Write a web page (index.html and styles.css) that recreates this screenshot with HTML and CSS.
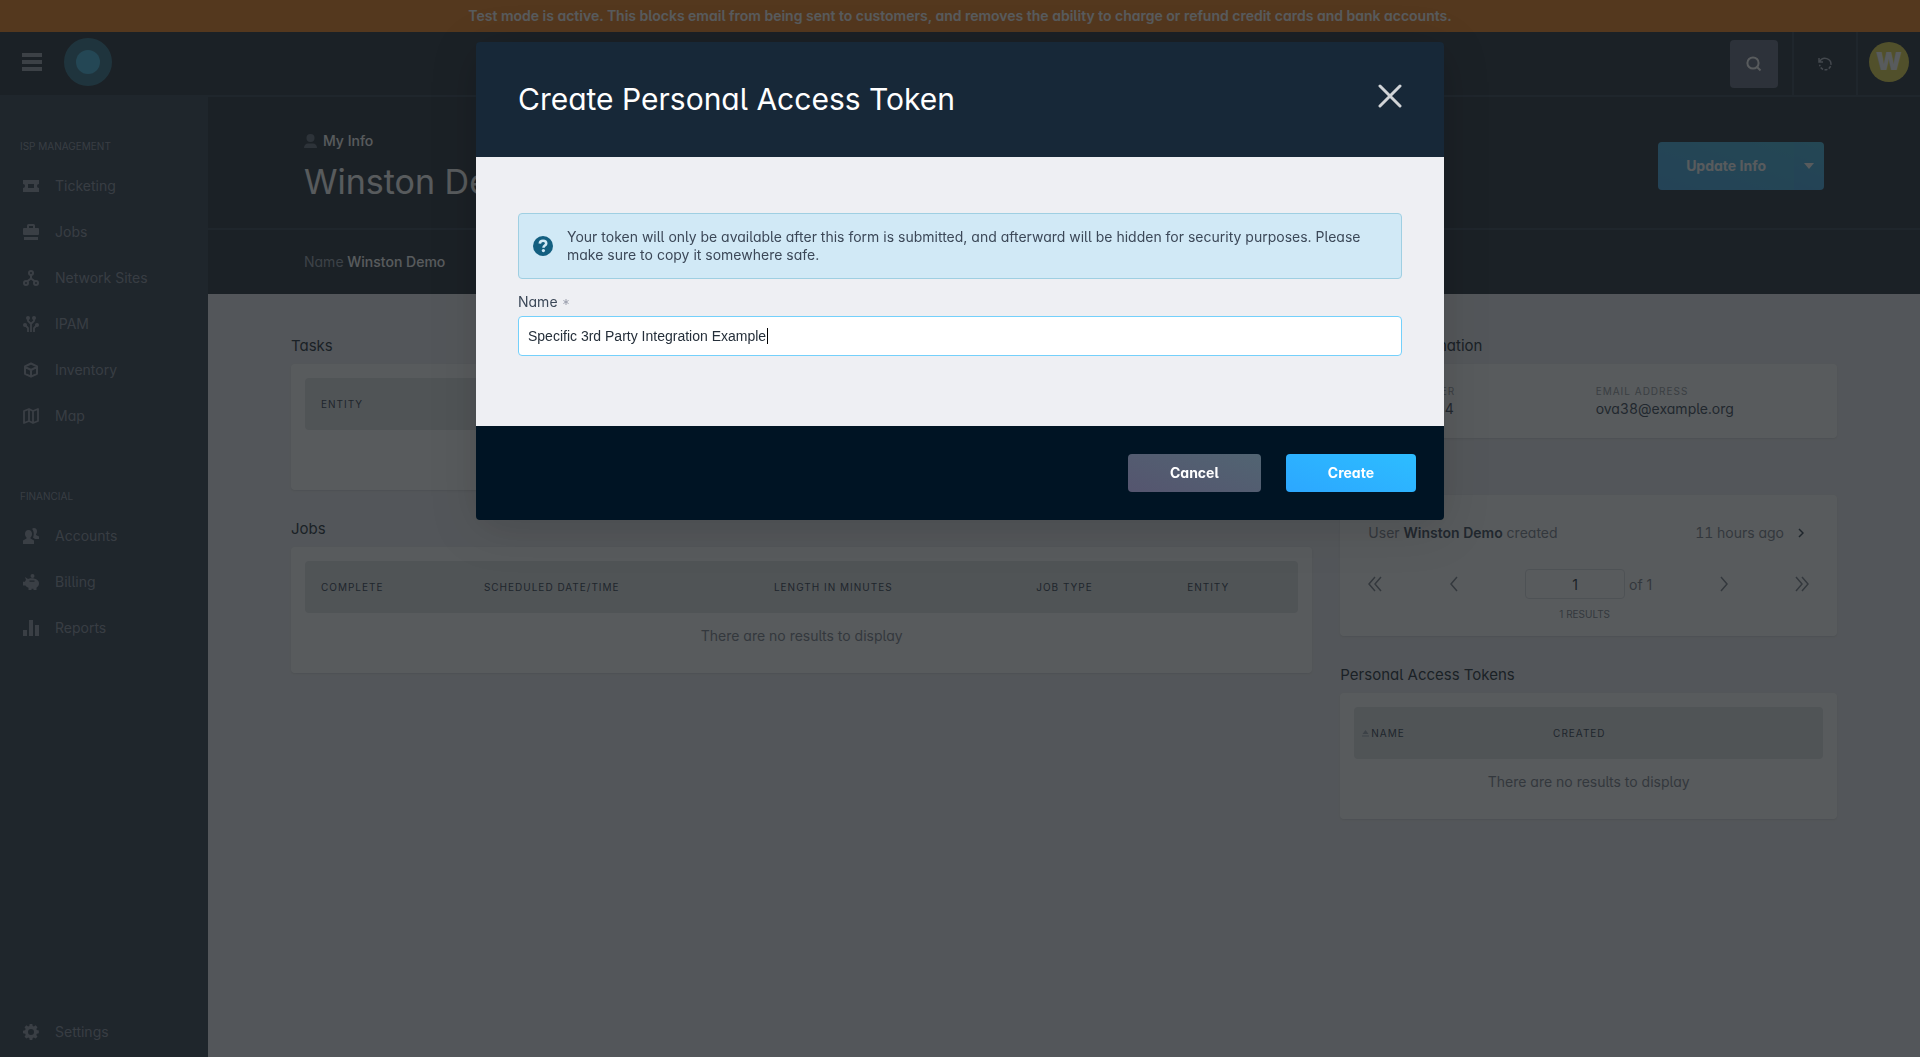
FILE: index.html
```html
<!DOCTYPE html>
<html lang="en">
<head>

<meta charset="utf-8">
<title>My Info</title>
<meta name="viewport" content="width=device-width, initial-scale=1.0">

<link rel="stylesheet" href="styles.css">

</head>
<body>

<div class="banner">Test mode is active. This blocks email from being sent to customers, and removes the ability to charge or refund credit cards and bank accounts.</div>

<header class="topbar">
    <button class="icon-button menu-button" type="button" aria-label="Menu">
        <svg width="20" height="18" viewBox="0 0 20 18"><path d="M0 0h20v4H0zM0 7h20v4H0zM0 14h20v4H0z"/></svg>
    </button>
    <a class="logo" href="#" aria-label="Home">
        <svg width="48" height="48" viewBox="0 0 48 48"><circle class="logo-ring" cx="24" cy="24" r="24"/><circle class="logo-dot" cx="24" cy="24" r="12"/></svg>
    </a>
    <button class="icon-button search-button" type="button" aria-label="Search">
        <svg width="16" height="16" viewBox="0 0 16 16" fill="none" stroke="currentColor" stroke-width="2"><circle cx="7" cy="7" r="5.6"/><path d="M10.5 10.5L14.5 14.5"/></svg>
    </button>
    <button class="icon-button topbar-cell" type="button" aria-label="History">
        <svg width="14" height="14" viewBox="0 0 14 14" fill="none" stroke="currentColor" stroke-width="1.5"><path d="M1 1v4h4M1.5 4.8C3 2 6 .8 8.800 1.600 11.500 2.400 13.200 5 12.900 7.800"/><path d="M12.600 9.200C11 12.500 7.500 13.600 4.800 12.300 3 11.400 1.900 9.800 1.700 7.800" stroke-dasharray="3 1.500"/></svg>
    </button>
    <a class="topbar-cell" href="#" aria-label="Winston Demo"><span class="avatar">W</span></a>
</header>

<div class="page">

    <nav class="sidebar">
        <h2 class="nav-title">ISP Management</h2>
        <ul class="nav-list">
            <li><a href="#"><svg class="nav-icon" viewBox="0 0 16 16"><path fill-rule="evenodd" d="M0 2h16v4a2 2 0 0 0 0 4v4H0v-4a2 2 0 0 0 0-4zM5 6v4h6V6z"/></svg>Ticketing</a></li>
            <li><a href="#"><svg class="nav-icon" viewBox="0 0 16 16"><path fill-rule="evenodd" d="M4 4V1.500Q4 0 5.500 0h5Q12 0 12 1.500V4h3q1 0 1 1v5q0 1-1 1H1q-1 0-1-1V5q0-1 1-1zM6 4h4V2H6zM1 13h14v3H1z"/></svg>Jobs</a></li>
            <li><a href="#"><svg class="nav-icon" viewBox="0 0 16 16" fill="none" stroke="currentColor" stroke-width="2"><circle cx="8" cy="3" r="2"/><circle cx="3" cy="13" r="2"/><circle cx="13" cy="13" r="2"/><path d="M8 5v4M4 11.500L8 8.500l4 3"/></svg>Network Sites</a></li>
            <li><a href="#"><svg class="nav-icon" viewBox="0 0 16 16"><circle cx="5" cy="2" r="2"/><circle cx="11" cy="2" r="2"/><circle cx="2" cy="9" r="2"/><circle cx="14" cy="9" r="2"/><path d="M5 2v3l3 3 3-3V2M8 7v9M2 9l3 3v4M14 9l-3 3v4" fill="none" stroke="currentColor" stroke-width="1.800"/></svg>IPAM</a></li>
            <li><a href="#"><svg class="nav-icon" viewBox="0 0 16 16" fill="none" stroke="currentColor" stroke-width="2" stroke-linejoin="round"><path d="M8 1.500l6 2.800v7.500l-6 2.900-6-2.900V4.300zM2 4.800L8 8l6-3.200M8 8v6.500"/></svg>Inventory</a></li>
            <li><a href="#"><svg class="nav-icon" viewBox="0 0 16 16" fill="none" stroke="currentColor" stroke-width="1.800" stroke-linejoin="round"><path d="M1 3l5-2 4 2 5-2v12l-5 2-4-2-5 2zM6 1v12M10 3v12"/></svg>Map</a></li>
        </ul>
        <h2 class="nav-title">Financial</h2>
        <ul class="nav-list">
            <li><a href="#"><svg class="nav-icon" viewBox="0 0 16 16"><path d="M5.500 2C8 2 9 4 9 6c0 1.500-.6 2.700-1.500 3.500v1L11 12.500V16H0v-3.500l3.500-2v-1C2.600 8.700 2 7.500 2 6c0-2 1-4 3.500-4zM9 1c.5-.7 1.300-1 2-1 2 0 3 1.500 3 3.500 0 1-.4 2-1 2.700V7l3 1.500V11h-4L10 9.500C11 7.500 11.300 3 9 1z"/></svg>Accounts</a></li>
            <li><a href="#"><svg class="nav-icon" viewBox="0 0 16 16"><circle cx="9.500" cy="2" r="2"/><path fill-rule="evenodd" d="M2 3l3 2c1-.5 2-.7 3.500-.7C13 4.300 16 6.500 16 9.500c0 1.800-1 3.200-2.500 4.200V16h-3v-1.200h-2V16h-3v-2.300C4 13.200 3 12.500 2.500 11.500H0V7.800h2C2.200 7 2.500 6.500 3 6zM6.500 6.500v1.200h5V6.500z"/></svg>Billing</a></li>
            <li><a href="#"><svg class="nav-icon" viewBox="0 0 16 16"><path d="M0 10h4v6H0zM6 0h4v16H6zM12 5h4v11h-4z"/></svg>Reports</a></li>
        </ul>
        <ul class="nav-list nav-bottom">
            <li><a href="#"><svg class="nav-icon" viewBox="0 0 16 16"><path fill-rule="evenodd" d="M6.700 0h2.600l.4 2 1.200.5 1.700-1.200 1.900 1.900-1.200 1.700.5 1.200 2 .5v2.700l-2 .5-.5 1.200 1.200 1.700-1.900 1.900-1.700-1.200-1.200.5-.4 2H6.700l-.4-2-1.200-.5-1.700 1.200-1.900-1.900L2.700 11l-.5-1.200-2.200-.5V6.700l2-.5.7-1.300-1.200-1.700 1.900-1.900 1.700 1.200 1.200-.5zM8 5a3 3 0 1 0 0 6 3 3 0 0 0 0-6z"/></svg>Settings</a></li>
        </ul>
    </nav>

    <main class="main">
        <div class="hero">
            <div class="hero-text">
                <p class="crumb"><svg width="13" height="14" viewBox="0 0 13 14"><circle cx="6.500" cy="4" r="4"/><path d="M0 14c0-3 2-4.500 4-4.500h5c2 0 4 1.500 4 4.500z"/></svg>My Info</p>
                <h1 class="hero-title">Winston Demo</h1>
            </div>
            <div class="split-button">
                <button type="button" class="split-main">Update Info</button>
                <button type="button" class="split-more" aria-label="More actions"><svg width="10" height="6" viewBox="0 0 10 6"><path d="M0 0h10L5 6z"/></svg></button>
            </div>
        </div>
        <div class="hero-meta"><span>Name</span> Winston Demo</div>

        <div class="content">
            <div class="col-wide">
                <section>
                    <h2 class="card-title">Tasks</h2>
                    <div class="card">
                        <table class="data-table">
                            <thead><tr><th>Entity</th></tr></thead>
                            <tbody><tr><td>There are no results to display</td></tr></tbody>
                        </table>
                    </div>
                </section>
                <section>
                    <h2 class="card-title">Jobs</h2>
                    <div class="card">
                        <table class="data-table jobs-table">
                            <thead><tr><th>Complete</th><th>Scheduled Date/Time</th><th>Length in Minutes</th><th>Job Type</th><th>Entity</th></tr></thead>
                            <tbody><tr><td colspan="5">There are no results to display</td></tr></tbody>
                        </table>
                    </div>
                </section>
            </div>

            <div class="col-narrow">
                <section>
                    <h2 class="card-title">Contact Information</h2>
                    <div class="card">
                        <dl class="contact">
                            <div><dt>Home Number</dt><dd>1 555-0134</dd></div>
                            <div><dt>Email Address</dt><dd>ova38@example.org</dd></div>
                        </dl>
                    </div>
                </section>
                <section>
                    <h2 class="card-title">Activity</h2>
                    <div class="card">
                        <div class="log-row">
                            <span>User <b>Winston Demo</b> created</span>
                            <span class="log-time">11 hours ago</span>
                            <svg width="6" height="10" viewBox="0 0 6 10" fill="none" stroke="currentColor" stroke-width="1.500"><path d="M1 1l4 4-4 4"/></svg>
                        </div>
                        <div class="pager">
                            <button class="icon-button" type="button" aria-label="First page"><svg width="14" height="16" viewBox="0 0 14 16"><path d="M7 1L1 8l6 7M13 1L7 8l6 7"/></svg></button>
                            <button class="icon-button" type="button" aria-label="Previous page"><svg width="8" height="16" viewBox="0 0 8 16"><path d="M7 1L1 8l6 7"/></svg></button>
                            <label class="pager-page"><input type="text" value="1" aria-label="Page"> of 1</label>
                            <button class="icon-button" type="button" aria-label="Next page"><svg width="8" height="16" viewBox="0 0 8 16"><path d="M1 1l6 7-6 7"/></svg></button>
                            <button class="icon-button" type="button" aria-label="Last page"><svg width="14" height="16" viewBox="0 0 14 16"><path d="M1 1l6 7-6 7M7 1l6 7-6 7"/></svg></button>
                        </div>
                        <p class="pager-total">1 results</p>
                    </div>
                </section>
                <section>
                    <h2 class="card-title">Personal Access Tokens</h2>
                    <div class="card">
                        <table class="data-table tokens-table">
                            <thead><tr><th><svg width="7" height="7" viewBox="0 0 7 7"><path d="M3.500 0L6.500 4h-6zM0 5.500h7v1H0z"/></svg>Name</th><th>Created</th></tr></thead>
                            <tbody><tr><td colspan="2">There are no results to display</td></tr></tbody>
                        </table>
                    </div>
                </section>
            </div>
        </div>
    </main>

</div>

<div class="overlay">
    <form class="modal" role="dialog" aria-labelledby="modal-title">
        <div class="modal-header">
            <h2 id="modal-title">Create Personal Access Token</h2>
            <button class="icon-button modal-close" type="button" aria-label="Close"><svg width="24" height="24" viewBox="0 0 24 24"><path d="M2 2l20 20M22 2L2 22"/></svg></button>
        </div>
        <div class="modal-body">
            <div class="notice">
                <svg width="20" height="20" viewBox="0 0 20 20"><circle cx="10" cy="10" r="10" fill="#135f80"/><path d="M6.800 7.600C6.900 5.700 8.200 4.800 10 4.800c1.900 0 3.200 1 3.200 2.600 0 2.200-2.700 2.200-2.700 4.300" fill="none" stroke="#d1e9f6" stroke-width="2.600"/><circle cx="10.400" cy="14.600" r="1.600" fill="#d1e9f6"/></svg>
                <p>Your token will only be available after this form is submitted, and afterward will be hidden for security purposes. Please make sure to copy it somewhere safe.</p>
            </div>
            <label class="field-label" for="token-name">Name <svg width="6" height="6" viewBox="0 0 6 6"><path d="M3 0v6M.4 1.500l5.200 3M5.600 1.500l-5.200 3"/></svg></label>
            <div class="field">
                <input id="token-name" type="text" value="Specific 3rd Party Integration Example">
                <span class="caret"></span>
            </div>
        </div>
        <div class="modal-footer">
            <button type="button" class="button button-cancel">Cancel</button>
            <button type="submit" class="button button-create">Create</button>
        </div>
    </form>
</div>

</body>
</html>
```
FILE: styles.css
```css
* {
    box-sizing: border-box;
}

body {
    margin: 0;
    min-height: 100vh;
    display: flex;
    flex-direction: column;
    background-color: #eeeef2;
    color: #3c4858;
    font-family: Inter, "Liberation Sans", sans-serif;
    font-feature-settings: "cv05", "cv11";
    font-size: 14px;
    line-height: 18px;
}

h1, h2, p, ul, dl, dd {
    margin: 0;
    padding: 0;
    font-weight: 400;
}

ul {
    list-style: none;
}

a {
    color: inherit;
    text-decoration: none;
}

button, input {
    font: inherit;
    font-feature-settings: inherit;
    color: inherit;
}

svg {
    display: block;
    flex: none;
    fill: currentColor;
}

svg[fill="none"] {
    fill: none;
}

.icon-button {
    display: flex;
    align-items: center;
    justify-content: center;
    border: 0;
    padding: 0;
    background: none;
}

/* top of the page */

.banner {
    padding: 7px 16px;
    background-color: #f1801f;
    color: #fff;
    font-weight: 600;
    text-align: center;
}

.topbar {
    display: flex;
    align-items: center;
    height: 65px;
    border-bottom: 2px solid #334050;
    background-color: #252f3a;
    color: #fff;
}

.menu-button {
    padding: 0 22px 3px;
    color: #9ca0ae;
}

.logo {
    margin-right: auto;
    padding-bottom: 3px;
}

.logo-ring {
    fill: #34758c;
}

.logo-dot {
    fill: #45b6e0;
}

.search-button {
    width: 48px;
    height: 48px;
    margin-right: 14px;
    border-radius: 4px;
    background-color: #646b80;
}

.topbar-cell {
    display: flex;
    align-items: center;
    justify-content: center;
    align-self: stretch;
    width: 64px;
    border-left: 2px solid #334050;
    color: #b4bac6;
}

.avatar {
    width: 40px;
    height: 40px;
    margin-bottom: 3px;
    border-radius: 50%;
    background-color: #e5d84b;
    color: #fff;
    font-size: 24px;
    font-weight: 900;
    line-height: 40px;
    text-align: center;
}

.page {
    display: flex;
    flex: 1;
}

/* sidebar */

.sidebar {
    display: flex;
    flex-direction: column;
    flex: none;
    width: 208px;
    padding-bottom: 2px;
    background-color: #334050;
    color: #8b94a2;
}

.nav-title {
    padding: 41px 20px 9px;
    color: #8b94a2;
    font-size: 10px;
    line-height: 16px;
    text-transform: uppercase;
}

.nav-list + .nav-title {
    padding-top: 49px;
}

.nav-list a {
    display: flex;
    align-items: center;
    gap: 16px;
    height: 46px;
    padding: 0 23px;
}

.nav-bottom {
    margin-top: auto;
}

.nav-icon {
    width: 16px;
    height: 16px;
    color: #9499a8;
}

/* page header */

.main {
    flex: 1;
}

.hero {
    display: flex;
    align-items: center;
    justify-content: space-between;
    height: 133px;
    padding: 6px 96px 0;
    border-bottom: 2px solid #334050;
    background-color: #252f3a;
    color: #fff;
}

.hero-text {
    padding-top: 4px;
}

.crumb {
    display: flex;
    align-items: center;
    gap: 6px;
    font-weight: 500;
}

.crumb svg {
    color: #66707e;
}

.hero-title {
    margin-top: 11px;
    font-size: 34px;
    line-height: 42px;
}

.split-button {
    display: flex;
    height: 48px;
    border-radius: 4px;
    overflow: hidden;
    color: #fff;
}

.split-button button {
    border: 0;
    background: linear-gradient(20deg, #45a8e8, #45b8de);
}

.split-main {
    padding: 0 28px;
    font-weight: 700;
}

.split-more {
    padding: 0 10px;
}

.hero-meta {
    padding: 23px 96px;
    background-color: #252f3a;
    color: #fff;
    font-weight: 500;
}

.hero-meta span {
    color: #9ca4b0;
    font-weight: 400;
}

/* cards */

.content {
    display: grid;
    grid-template-columns: repeat(3, 1fr);
    gap: 28px;
    padding: 41px 83px;
}

.col-wide {
    grid-column: span 2;
}

.card-title {
    margin-bottom: 8px;
    color: #252f3a;
    font-size: 15px;
    line-height: 21px;
}

.card {
    margin-bottom: 28px;
    padding: 14px;
    border-radius: 4px;
    background-color: #fff;
    box-shadow: 0 1px 2px rgba(0, 0, 0, 0.1);
}

.data-table {
    width: 100%;
    border-collapse: separate;
    border-spacing: 0;
    table-layout: fixed;
}

.data-table th {
    height: 52px;
    padding: 0 16px;
    background-color: #e2e4e6;
    color: #334050;
    font-size: 10px;
    font-weight: 400;
    letter-spacing: 1px;
    text-align: left;
    text-transform: uppercase;
}

.data-table th:first-child {
    border-radius: 4px 0 0 4px;
}

.data-table th:last-child {
    border-radius: 0 4px 4px 0;
}

.data-table th:only-child {
    border-radius: 4px;
}

.data-table td {
    padding: 14px;
    color: #7c828c;
    text-align: center;
}

.jobs-table th:nth-child(1) { width: 16.4%; }
.jobs-table th:nth-child(2) { width: 29.2%; }
.jobs-table th:nth-child(3) { width: 26.4%; }
.jobs-table th:nth-child(4) { width: 15.2%; }

.tokens-table th:first-child {
    width: 39%;
    padding-left: 8px;
}

.tokens-table th svg {
    display: inline-block;
    margin-right: 2px;
    color: #9ca4b0;
}

.contact {
    display: grid;
    grid-template-columns: 1fr 1fr;
    gap: 14px;
    padding: 4px 14px 6px;
}

.contact dt {
    color: #9499a0;
    font-size: 10px;
    letter-spacing: 1px;
    text-transform: uppercase;
}

.contact dd, .log-time {
    font-feature-settings: "cv05", "cv11", "tnum";
}

.log-row {
    display: flex;
    align-items: center;
    gap: 14px;
    height: 48px;
    padding: 0 19px 0 14px;
    color: #7c828c;
}

.log-row b {
    color: #3c4858;
    font-weight: 600;
}

.log-row svg {
    color: #334050;
}

.log-time {
    margin-left: auto;
}

.pager {
    display: flex;
    align-items: center;
    justify-content: space-between;
    margin-top: 12px;
    padding: 0 14px;
    color: #7c828c;
}

.pager svg {
    fill: none;
    stroke: currentColor;
    stroke-width: 1.5;
}

.pager-page input {
    width: 100px;
    height: 30px;
    border: 1px solid #dcdee2;
    border-radius: 4px;
    background: none;
    color: #252f3a;
    text-align: center;
}

.pager-total {
    margin-top: 8px;
    padding-right: 8px;
    color: #7c828c;
    font-size: 10px;
    line-height: 15px;
    text-align: center;
    text-transform: uppercase;
}

/* modal */

.overlay {
    position: fixed;
    top: 0;
    right: 0;
    bottom: 0;
    left: 0;
    padding: 42px 16px;
    overflow: auto;
    background-color: rgba(23, 28, 31, 0.72);
}

.modal {
    max-width: 968px;
    margin: 0 auto;
    border-radius: 4px;
    overflow: hidden;
    box-shadow: 0 8px 48px rgba(0, 0, 0, 0.15);
}

.modal-header {
    display: flex;
    align-items: center;
    justify-content: space-between;
    padding: 36px 42px 37px;
    background-color: #172838;
    color: #fff;
}

.modal-header h2 {
    font-size: 30px;
    line-height: 42px;
}

.modal-close {
    margin-bottom: 7px;
    color: #d1d4d7;
}

.modal-close svg {
    stroke: currentColor;
    stroke-width: 3;
    stroke-linecap: round;
}

.modal-body {
    padding: 56px 42px 70px;
    background-color: #eeeff3;
}

.notice {
    display: flex;
    align-items: center;
    gap: 14px;
    padding: 14px;
    border: 1px solid #9fcfe2;
    border-radius: 4px;
    background-color: #d1e9f6;
}

.notice p {
    padding-right: 14px;
}

.field-label {
    display: flex;
    align-items: center;
    gap: 5px;
    margin: 14px 0 5px;
}

.field-label svg {
    stroke: #9ca0ae;
}

.field {
    position: relative;
}

.field input {
    display: block;
    width: 100%;
    height: 40px;
    padding: 0 9px;
    border: 1px solid #74d0fb;
    border-radius: 4px;
    background-color: #fff;
    color: #252f3a;
    font-family: "Liberation Sans", Arial, sans-serif;
    outline: 0;
}

/* text cursor at the end of the value */
.caret {
    position: absolute;
    top: 12px;
    left: 249px;
    width: 1px;
    height: 16px;
    background-color: #000;
}

.modal-footer {
    display: flex;
    justify-content: flex-end;
    gap: 25px;
    padding: 28px;
    background-color: #001424;
}

.button {
    height: 38px;
    padding: 0 42px;
    border: 0;
    border-radius: 4px;
    color: #fff;
    font-weight: 700;
}

.button-cancel {
    background: linear-gradient(20deg, #55556f, #516472);
}

.button-create {
    background: linear-gradient(20deg, #2ca7ff, #2dbdff);
}
```
